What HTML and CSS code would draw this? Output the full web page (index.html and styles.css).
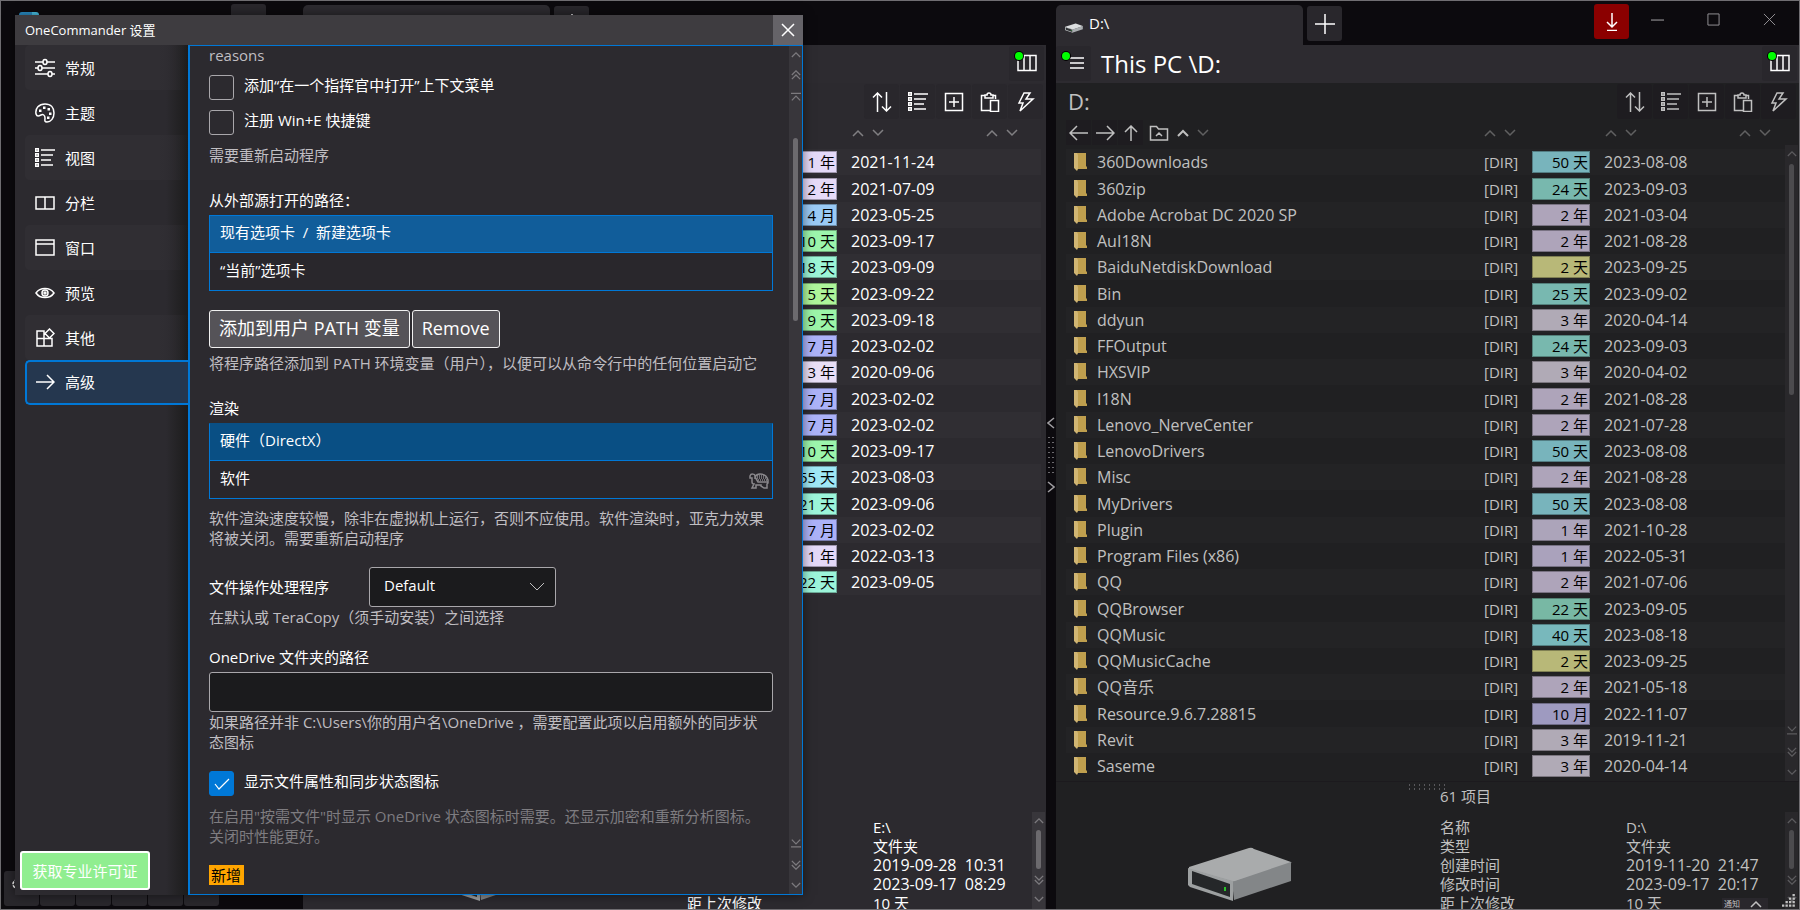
FILE: index.html
```html
<!DOCTYPE html>
<html lang="zh-CN">
<head>
    <meta charset="UTF-8">
    <meta name="viewport" content="width=device-width, initial-scale=1.0">
    <title>OneCommander</title>
    <link rel="stylesheet" href="styles.css">
</head>
<body>
    <!-- icon set -->
    <svg class="icon-set" aria-hidden="true">
        <symbol id="i-up" viewBox="0 0 12 8"><path d="M1 7l5-5 5 5"/></symbol>
        <symbol id="i-down" viewBox="0 0 12 8"><path d="M1 1l5 5 5-5"/></symbol>
        <symbol id="i-up2" viewBox="0 0 12 12"><path d="M1 6l5-5 5 5M1 11l5-5 5 5"/></symbol>
        <symbol id="i-down2" viewBox="0 0 12 12"><path d="M1 1l5 5 5-5M1 6l5 5 5-5"/></symbol>
        <symbol id="i-top" viewBox="0 0 12 12"><path d="M0 1.5h12M1 10l5-5 5 5"/></symbol>
        <symbol id="i-bottom" viewBox="0 0 12 12"><path d="M1 2l5 5 5-5M0 10.5h12"/></symbol>
        <symbol id="i-close" viewBox="0 0 14 14"><path d="M1 1l12 12M13 1L1 13"/></symbol>
        <symbol id="i-plus" viewBox="0 0 20 20"><path d="M10 0v20M0 10h20"/></symbol>
        <symbol id="i-sort" viewBox="0 0 20 20"><path d="M5.5 20V1M1 5.5L5.5 1 10 5.5M14.500 0v19M10 14.500l4.500 4.500 4.500-4.500"/></symbol>
        <symbol id="i-list" viewBox="0 0 20 20"><path d="M6 2h14M6 7h12M6 12h10M6 17h12"/><path class="solid" d="M0 0h4v4H0zM0 5h4v4H0zM0 10h4v4H0zM0 15h4v4H0z"/><path class="hole" d="M1.500 1.500h1v1h-1zM1.500 6.500h1v1h-1zM1.500 11.500h1v1h-1zM1.500 16.500h1v1h-1z"/></symbol>
        <symbol id="i-new" viewBox="0 0 20 20"><path d="M1.500 1.500h17v17h-17zM10 5v10M5 10h10"/></symbol>
        <symbol id="i-paste" viewBox="0 0 20 20"><path d="M10 18.500H1.500v-15H5M13 3.500h2.500V7M5 3v3h8V3h-2a2 2 0 0 0-4 0zM10.500 8.500h8v11h-8z"/></symbol>
        <symbol id="i-bolt" viewBox="0 0 20 20"><path d="M8 1h6l-4 6h7L4 19l3-8H3z"/></symbol>
        <symbol id="i-cols" viewBox="0 0 20 18"><path d="M1 1.500h18v15H1zM7 1.500v15M13 1.500v15"/></symbol>
        <symbol id="i-menu" viewBox="0 0 14 12"><path d="M0 1h14M0 6h14M0 11h14"/></symbol>
        <symbol id="i-left" viewBox="0 0 20 16"><path d="M19 8H1M8 1L1 8l7 7"/></symbol>
        <symbol id="i-right" viewBox="0 0 20 16"><path d="M1 8h18M12 1l7 7-7 7"/></symbol>
        <symbol id="i-upward" viewBox="0 0 16 16"><path d="M8 16V1M2 7l6-6 6 6"/></symbol>
        <symbol id="i-folderup" viewBox="0 0 20 16"><path d="M1.500 1.500h6l2 2.500h9v11h-17zM7 11l3-3 3 3"/></symbol>
        <symbol id="i-sliders" viewBox="0 0 20 20"><path d="M0 4h8M12 4h8M0 10h3M7 10h13M0 16h13M17 16h3"/><ellipse cx="10" cy="4" rx="2" ry="2.500"/><ellipse cx="5" cy="10" rx="2" ry="2.500"/><ellipse cx="15" cy="16" rx="2" ry="2.500"/></symbol>
        <symbol id="i-palette" viewBox="0 0 20 20"><path d="M1 11C0 5 4 1 10 1s9 4 9 9-3 9-7 9c-3 0-2-2-2-4 0-3-2-4-4-3-2 1-4 2-5-1z"/><path class="solid" d="M4 6.500h2.500V9H4zM8 3.500h2.500V6H8zM12.500 5H15v2.500h-2.500zM14 9.500h2.500V12H14zM12 13.500h2.500V16H12z"/></symbol>
        <symbol id="i-split" viewBox="0 0 20 20"><path d="M1 4h18v12H1zM10 4v12"/></symbol>
        <symbol id="i-window" viewBox="0 0 20 20"><path d="M1 2h18v15H1zM1 6h18"/></symbol>
        <symbol id="i-eye" viewBox="0 0 20 20"><path d="M1 10c4-6 14-6 18 0-4 6-14 6-18 0z"/><circle cx="10" cy="10" r="3"/><circle cx="10" cy="10" r="1"/></symbol>
        <symbol id="i-apps" viewBox="0 0 20 20"><path d="M2 3h7v15H2zM2 10.500h15V18H9v-7.500M14.500 1l4.500 4.500-4.500 4.500L10 5.500z"/></symbol>
        <symbol id="i-folder" viewBox="0 0 13 18"><path fill="#bf9f4e" d="M3 0h9v13l1 1v2H3z"/><path fill="#d0b573" d="M0 0h3l1 2v14l-1 2-3-3z"/></symbol>
        <symbol id="i-turtle" viewBox="0 0 20 16"><path d="M6 6V3c0-2-4-3-5 0v2h2v4c0 1 1 2 2 2l-2 4h4v-3h5v1l3 2h3v-4l1-1V7c-1-4-4-6-8-6-3 0-4 1-5 3l3 5h10"/><path class="dots" d="M8 3h7M8 5h9M9 7h9"/></symbol>
        <symbol id="i-drive" viewBox="0 0 104 54">
            <path fill="#a9abac" d="M1 20L61 1q3-1 5 1l37 13q1 1-1 2L46 35 1 22z"/>
            <path fill="#838688" d="M103 15v19L46 53 44 35z"/>
            <path fill="#9da0a1" d="M0 21l45 13v20L2 40l-2-2z"/>
            <path fill="#252729" d="M4 24l38 13v13L4 37z"/>
            <path fill="#27c427" d="M36 40h2v4h-2z"/>
        </symbol>
        <symbol id="i-grip" viewBox="0 0 12 12"><path class="solid" d="M9 0h2v2H9zM6 3h2v2H6zM9 3h2v2H9zM3 6h2v2H3zM6 6h2v2H6zM9 6h2v2H9zM0 9h2v2H0zM3 9h2v2H3zM6 9h2v2H6zM9 9h2v2H9z"/></symbol>
    </svg>

    <div class="window">
        <aside class="sidebar">
            <div class="sidebar-top">
                <span class="app-logo"></span>
                <button class="tool" aria-label="Minimize"><svg class="icon" viewBox="0 0 20 20"><path d="M0 7h20"/></svg></button>
            </div>
            <div class="sidebar-bottom">
                <button class="tool" aria-label="Settings">
                    <svg class="icon" viewBox="0 0 20 20"><circle cx="5" cy="5" r="4" stroke-dasharray="3 1"/><circle cx="13" cy="10" r="5" stroke-width="2" stroke-dasharray="3 2"/><circle cx="13" cy="10" r="2.5"/></svg>
                </button>
                <button class="tool" aria-label="Theme"><svg class="icon" viewBox="0 0 20 20"><circle cx="10" cy="3" r="7" stroke-width="2"/></svg></button>
                <button class="tool" aria-label="Layout"><svg class="icon" viewBox="0 0 20 20"><path d="M0 1h20v8H0z"/></svg></button>
                <button class="tool" aria-label="Edit"><svg class="icon" viewBox="0 0 20 20"><path d="M11 2L2 12"/></svg></button>
                <button class="tool" aria-label="Columns"><svg class="icon" viewBox="0 0 20 20"><path d="M3 0v11M17 0v11"/></svg></button>
                <button class="tool" aria-label="Transfer"><svg class="icon" viewBox="0 0 20 20"><path d="M0 8h11M16 2v10M12 8h8" stroke-width="3"/></svg></button>
            </div>
        </aside>

        <section class="pane active">
            <div class="tabs">
                <div class="tab"></div>
                <button class="tool" aria-label="New tab"><svg class="icon"><use href="#i-plus"/></svg></button>
            </div>
            <header class="pane-header">
                <button class="tool columns" aria-label="Columns"><svg class="icon"><use href="#i-cols"/></svg></button>
            </header>
            <div class="toolbar">
                <button class="tool" aria-label="Sort"><svg class="icon"><use href="#i-sort"/></svg></button>
                <button class="tool" aria-label="List view"><svg class="icon"><use href="#i-list"/></svg></button>
                <button class="tool" aria-label="New"><svg class="icon"><use href="#i-new"/></svg></button>
                <button class="tool" aria-label="Paste"><svg class="icon"><use href="#i-paste"/></svg></button>
                <button class="tool" aria-label="Actions"><svg class="icon"><use href="#i-bolt"/></svg></button>
            </div>
            <div class="sort-row">
                <div class="nav"></div>
                <div class="sorters"></div>
                <div class="sorters"><svg class="caret"><use href="#i-up"/></svg><svg class="caret"><use href="#i-down"/></svg></div>
                <div class="sorters"><svg class="caret"><use href="#i-up"/></svg><svg class="caret"><use href="#i-down"/></svg></div>
            </div>
            <div class="list">
                <table class="files">
                    <colgroup><col><col class="c-size"><col class="c-age"><col class="c-date"></colgroup>
                    <tbody id="filesLeft"></tbody>
                </table>
            </div>
            <footer class="details">
                <div class="preview"><svg class="drive"><use href="#i-drive"/></svg></div>
                <dl class="props">
                    <dt></dt><dd>E:\</dd>
                    <dt></dt><dd>文件夹</dd>
                    <dt></dt><dd class="num">2019-09-28&nbsp; 10:31</dd>
                    <dt></dt><dd class="num">2023-09-17&nbsp; 08:29</dd>
                    <dt>距上次修改</dt><dd>10 天</dd>
                </dl>
                <div class="scrollbar">
                    <svg class="caret"><use href="#i-up"/></svg>
                    <span class="thumb"></span>
                    <svg class="caret2"><use href="#i-down2"/></svg>
                    <svg class="caret"><use href="#i-down"/></svg>
                </div>
            </footer>
        </section>

        <div class="splitter">
            <svg viewBox="0 0 8 12"><path d="M7 1L1 6l6 5"/></svg>
            <span class="grip-v"></span>
            <svg viewBox="0 0 8 12"><path d="M1 1l6 5-6 5"/></svg>
        </div>

        <section class="pane inactive">
            <div class="tabs">
                <div class="tab"><svg class="drive-small"><use href="#i-drive"/></svg>D:\</div>
                <button class="tool" aria-label="New tab"><svg class="icon"><use href="#i-plus"/></svg></button>
                <div class="window-controls">
                    <button class="update" aria-label="Update"><svg viewBox="0 0 12 18"><path d="M6 0v14M1 9l5 5 5-5M1 17.500h10"/></svg></button>
                    <button aria-label="Minimize"><svg viewBox="0 0 12 12"><path d="M0 6.500h12"/></svg></button>
                    <button aria-label="Maximize"><svg viewBox="0 0 14 14"><path d="M1 1h12v12H1z"/></svg></button>
                    <button aria-label="Close"><svg viewBox="0 0 14 14"><use href="#i-close"/></svg></button>
                </div>
            </div>
            <header class="pane-header">
                <button class="tool menu" aria-label="Menu"><svg class="icon"><use href="#i-menu"/></svg></button>
                <h1>This PC \D:</h1>
                <button class="tool columns" aria-label="Columns"><svg class="icon"><use href="#i-cols"/></svg></button>
            </header>
            <div class="toolbar">
                <h2>D:</h2>
                <button class="tool" aria-label="Sort"><svg class="icon"><use href="#i-sort"/></svg></button>
                <button class="tool" aria-label="List view"><svg class="icon"><use href="#i-list"/></svg></button>
                <button class="tool" aria-label="New"><svg class="icon"><use href="#i-new"/></svg></button>
                <button class="tool" aria-label="Paste"><svg class="icon"><use href="#i-paste"/></svg></button>
                <button class="tool" aria-label="Actions"><svg class="icon"><use href="#i-bolt"/></svg></button>
            </div>
            <div class="sort-row">
                <div class="nav">
                    <button aria-label="Back"><svg class="arrow"><use href="#i-left"/></svg></button>
                    <button aria-label="Forward"><svg class="arrow"><use href="#i-right"/></svg></button>
                    <button aria-label="Up"><svg class="arrow"><use href="#i-upward"/></svg></button>
                    <svg class="folder-up"><use href="#i-folderup"/></svg>
                    <svg class="caret on"><use href="#i-up"/></svg>
                    <svg class="caret"><use href="#i-down"/></svg>
                </div>
                <div class="sorters"><svg class="caret"><use href="#i-up"/></svg><svg class="caret"><use href="#i-down"/></svg></div>
                <div class="sorters"><svg class="caret"><use href="#i-up"/></svg><svg class="caret"><use href="#i-down"/></svg></div>
                <div class="sorters"><svg class="caret"><use href="#i-up"/></svg><svg class="caret"><use href="#i-down"/></svg></div>
            </div>
            <div class="list">
                <table class="files">
                    <colgroup><col><col class="c-size"><col class="c-age"><col class="c-date"></colgroup>
                    <tbody id="filesRight"></tbody>
                </table>
                <div class="scrollbar">
                    <svg class="caret"><use href="#i-up"/></svg>
                    <span class="thumb"></span>
                    <svg class="caret2"><use href="#i-bottom"/></svg>
                    <svg class="caret2"><use href="#i-down2"/></svg>
                    <svg class="caret"><use href="#i-down"/></svg>
                </div>
            </div>
            <footer class="details">
                <span class="grip-h"></span>
                <div class="preview"><svg class="drive"><use href="#i-drive"/></svg></div>
                <div class="info">
                    <p class="count">61 项目</p>
                    <dl class="props">
                        <dt>名称</dt><dd>D:\</dd>
                        <dt>类型</dt><dd>文件夹</dd>
                        <dt>创建时间</dt><dd class="num">2019-11-20&nbsp; 21:47</dd>
                        <dt>修改时间</dt><dd class="num">2023-09-17&nbsp; 20:17</dd>
                        <dt>距上次修改</dt><dd>10 天</dd>
                    </dl>
                </div>
                <div class="scrollbar">
                    <svg class="caret"><use href="#i-up"/></svg>
                    <span class="thumb"></span>
                    <svg class="caret2"><use href="#i-down2"/></svg>
                    <svg class="caret"><use href="#i-down"/></svg>
                </div>
                <div class="notice">通知 <svg class="caret on"><use href="#i-up"/></svg></div>
                <svg class="grip-corner"><use href="#i-grip"/></svg>
            </footer>
        </section>
    </div>

    <div class="dialog" role="dialog" aria-label="OneCommander 设置">
        <div class="dialog-title">
            <span>OneCommander 设置</span>
            <button class="dialog-close" aria-label="Close"><svg><use href="#i-close"/></svg></button>
        </div>
        <div class="dialog-body">
            <nav class="menu-list">
                <a href="#general"><svg class="icon"><use href="#i-sliders"/></svg>常规</a>
                <a href="#theme"><svg class="icon"><use href="#i-palette"/></svg>主题</a>
                <a href="#view"><svg class="icon"><use href="#i-list"/></svg>视图</a>
                <a href="#columns"><svg class="icon"><use href="#i-split"/></svg>分栏</a>
                <a href="#window"><svg class="icon"><use href="#i-window"/></svg>窗口</a>
                <a href="#preview"><svg class="icon"><use href="#i-eye"/></svg>预览</a>
                <a href="#other"><svg class="icon"><use href="#i-apps"/></svg>其他</a>
                <a href="#advanced" class="selected"><svg class="icon arrow"><use href="#i-right"/></svg>高级</a>
                <button class="license">获取专业许可证</button>
            </nav>
            <form class="settings">
                <p class="note">reasons</p>
                <div class="check">
                    <input type="checkbox" id="contextMenu">
                    <label for="contextMenu">添加“在一个指挥官中打开”上下文菜单</label>
                </div>
                <div class="check">
                    <input type="checkbox" id="winE">
                    <label for="winE">注册 Win+E 快捷键</label>
                </div>
                <p class="note restart">需要重新启动程序</p>

                <p class="title">从外部源打开的路径：</p>
                <div class="options">
                    <label><input type="radio" name="external" checked>现有选项卡&nbsp; /&nbsp; 新建选项卡</label>
                    <label><input type="radio" name="external">“当前”选项卡</label>
                </div>

                <div class="buttons">
                    <button type="button">添加到用户 PATH 变量</button>
                    <button type="button">Remove</button>
                </div>
                <p class="note">将程序路径添加到 PATH 环境变量（用户），以便可以从命令行中的任何位置启动它</p>

                <p class="title">渲染</p>
                <div class="options flat">
                    <label><input type="radio" name="render" checked>硬件（DirectX）</label>
                    <label><input type="radio" name="render">软件<svg class="turtle"><use href="#i-turtle"/></svg></label>
                </div>
                <p class="note render">软件渲染速度较慢，除非在虚拟机上运行，否则不应使用。软件渲染时，亚克力效果<br>将被关闭。需要重新启动程序</p>

                <div class="select-row">
                    <label for="handler">文件操作处理程序</label>
                    <select id="handler">
                        <option>Default</option>
                        <option>TeraCopy</option>
                    </select>
                </div>
                <p class="note tight">在默认或 TeraCopy（须手动安装）之间选择</p>

                <label class="title path" for="onedrive">OneDrive 文件夹的路径</label>
                <input type="text" id="onedrive">
                <p class="note tight">如果路径并非 C:\Users\你的用户名\OneDrive ，需要配置此项以启用额外的同步状<br>态图标</p>

                <div class="check last">
                    <input type="checkbox" id="syncIcons" checked>
                    <label for="syncIcons">显示文件属性和同步状态图标</label>
                </div>
                <p class="note dim">在启用"按需文件"时显示 OneDrive 状态图标时需要。还显示加密和重新分析图标。<br>关闭时性能更好。</p>
                <p><span class="new">新增</span></p>
            </form>
            <div class="scrollbar">
                <svg class="caret"><use href="#i-up"/></svg>
                <svg class="caret2"><use href="#i-up2"/></svg>
                <svg class="caret2"><use href="#i-top"/></svg>
                <span class="thumb"></span>
                <svg class="caret2"><use href="#i-bottom"/></svg>
                <svg class="caret2"><use href="#i-down2"/></svg>
                <svg class="caret"><use href="#i-down"/></svg>
            </div>
        </div>
    </div>

    <script src="script.js"></script>
</body>
</html>
```
FILE: styles.css
```css
* {
    box-sizing: border-box;
}
body {
    margin: 0;
    height: 100vh;
    overflow: hidden;
    background-color: #0c0a0e;
    color: #fff;
    font: 15px/20px "Open Sans", "Noto Sans CJK SC", sans-serif;
}
h1, h2, p, dl, dd {
    margin: 0;
    font-weight: normal;
}
button, input, select {
    font: inherit;
    color: inherit;
    margin: 0;
    padding: 0;
}
button {
    background: none;
    border: none;
}
svg {
    display: block;
    flex: none;
    fill: none;
    stroke: currentColor;
    stroke-width: 1.5;
}
.solid {
    fill: currentColor;
    stroke: none;
}
.hole {
    fill: #2c2a2f;
    stroke: none;
}
.icon-set {
    display: none;
}
.icon {
    width: 20px;
    height: 20px;
}

/* main window */
.window {
    display: grid;
    grid-template-columns: 302px minmax(0, 1fr) 10px minmax(0, 1fr);
    height: 100vh;
    border: 1px solid #706e72;
}
.tool {
    display: flex;
    align-items: center;
    justify-content: center;
    flex: none;
    width: 35px;
    height: 35px;
    background-color: #29272c;
    border-radius: 3px;
}
.sidebar {
    display: flex;
    flex-direction: column;
    justify-content: space-between;
    padding: 3px;
}
.sidebar-top {
    display: flex;
    justify-content: space-between;
    padding: 0 34px 0 15px;
}
.app-logo {
    width: 20px;
    height: 20px;
    margin-top: 8px;
    border-radius: 3px;
    background: linear-gradient(to right, #2a8fc8 65%, #49c4e8 65%);
}
.sidebar-bottom {
    display: flex;
    gap: 1px;
}
.pane {
    display: flex;
    flex-direction: column;
    min-width: 0;
    height: calc(100vh - 2px);
}
.tabs {
    display: flex;
    gap: 4px;
    flex: none;
    height: 44px;
    padding-top: 4px;
    background-color: #0c0a0e;
}
.tabs .tool {
    margin-top: 1px;
}
.tab {
    display: flex;
    align-items: center;
    gap: 6px;
    width: 247px;
    padding: 0 9px 4px;
    background-color: #2d2b30;
    border-radius: 5px 5px 0 0;
}
.drive-small {
    width: 18px;
    height: 10px;
    margin-top: 9px;
    filter: brightness(1.3);
}
.drive-small, .drive {
    stroke: none;
}
.window-controls {
    display: flex;
    margin-left: auto;
    padding-right: 2px;
    color: #9a989c;
}
.window-controls button {
    display: flex;
    align-items: center;
    justify-content: center;
    width: 56px;
    height: 29px;
}
.window-controls svg {
    width: 13px;
    height: 13px;
    stroke-width: 1;
}
.window-controls .update {
    width: 35px;
    height: 35px;
    margin-top: -1px;
    background-color: #8b0000;
    border-radius: 3px;
    color: #fff;
}
.update svg {
    width: 12px;
    height: 18px;
    stroke-width: 1.5;
}
.pane-header {
    display: flex;
    align-items: center;
    flex: none;
    height: 38px;
    padding-right: 2px;
    background-color: #2d2b30;
}
.pane-header h1 {
    margin-left: 10px;
    font-size: 24px;
    line-height: 32px;
}
.pane-header .tool {
    position: relative;
    margin-bottom: 2px;
}
.pane-header .tool::before {
    content: "";
    position: absolute;
    top: 6px;
    left: 6px;
    width: 8px;
    height: 8px;
    border-radius: 50%;
    background-color: #00ff00;
    box-shadow: 0 0 0 1px #000;
}
.columns {
    margin-left: auto;
}
.menu .icon {
    width: 14px;
    height: 12px;
    margin-left: 6px;
}
.toolbar {
    display: flex;
    align-items: center;
    justify-content: flex-end;
    gap: 1px;
    flex: none;
    height: 37px;
    padding-right: 3px;
}
.toolbar h2 {
    margin-right: auto;
    padding: 0 0 2px 12px;
    font-size: 22px;
}
.sort-row {
    display: grid;
    grid-template-columns: minmax(0, 1fr) 121px 134px 60px;
    align-items: center;
    flex: none;
    height: 25px;
    padding-left: 10px;
}
.nav, .sorters {
    display: flex;
    align-items: center;
    gap: 8px;
}
.sort-row .caret {
    opacity: 0.4;
}
.sort-row .caret.on {
    opacity: 1;
    stroke-width: 2;
}
.nav button {
    display: flex;
    align-items: center;
    justify-content: center;
    width: 25px;
    height: 25px;
    margin-right: -7px;
    background-color: #1e1c20;
}
.arrow {
    width: 20px;
    height: 16px;
}
.folder-up {
    width: 20px;
    height: 16px;
    margin-left: 5px;
}
.caret {
    width: 12px;
    height: 8px;
}
.caret2 {
    width: 12px;
    height: 12px;
}
.active {
    background-color: #2c2a2f;
}
.inactive {
    background-color: #202022;
}
.inactive .toolbar,
.inactive .sort-row,
.inactive .list,
.inactive .details {
    color: #c0c0c0;
}
.inactive .toolbar .tool {
    background-color: #1e1c20;
}

/* file list */
.list {
    display: flex;
    flex: 1;
    min-height: 0;
    overflow: hidden;
    padding: 0 1px 0 10px;
}
.files {
    flex: 1;
    align-self: flex-start;
    margin-top: 4px;
    table-layout: fixed;
    border-collapse: collapse;
}
.c-size {
    width: 48px;
}
.c-age {
    width: 72px;
}
.c-date {
    width: 181px;
}
.active .c-date {
    width: 190px;
}
.active .files {
    margin-right: 4px;
}
.files td {
    height: 26px;
    padding: 0;
    white-space: nowrap;
}
.files tr:nth-child(4n+2) td {
    height: 27px;
}
.files tr:nth-child(odd) {
    background-color: #232325;
}
.active .files tr:nth-child(odd) {
    background-color: #302e33;
}
.file {
    display: flex;
    align-items: center;
    gap: 10px;
    padding-left: 8px;
    font-size: 16px;
}
.folder {
    width: 13px;
    height: 18px;
    stroke: none;
}
.age {
    display: block;
    width: 58px;
    height: 22px;
    padding-right: 1px;
    border: 1px solid rgba(0, 0, 0, 0.3);
    color: #000;
    text-align: right;
}
.num {
    font-size: 16px;
}

/* scrollbars */
.scrollbar {
    display: flex;
    flex-direction: column;
    align-items: center;
    flex: none;
    gap: 12px;
    width: 13px;
    padding: 5px 0;
    background-color: #38363b;
    color: #7c7a7e;
}
.scrollbar .caret {
    width: 10px;
    height: 7px;
}
.scrollbar .caret2 {
    width: 10px;
    height: 10px;
}
.thumb {
    width: 5px;
    margin-bottom: auto;
    border-radius: 3px;
    background-color: #6c6a6e;
}
.inactive .scrollbar {
    background-color: #29282b;
    color: #5c5b5e;
}
.inactive .thumb {
    background-color: #4c4b4e;
}
.list .thumb {
    height: 231px;
    margin-top: -5px;
}

/* bottom panel */
.details {
    position: relative;
    display: flex;
    flex: none;
    height: 128px;
    padding-right: 1px;
    overflow: hidden;
    border-top: 1px solid #1c1a1e;
}
.active .details {
    border-color: transparent;
}
.preview {
    width: 384px;
    padding: 65px 0 0 132px;
}
.drive {
    width: 104px;
    height: 54px;
}
.info {
    flex: 1;
}
.count {
    height: 36px;
    padding-top: 4px;
}
.props {
    display: grid;
    grid-template-columns: 186px 1fr;
    grid-auto-rows: 19px;
    align-content: start;
    flex: 1;
    line-height: 19px;
}
.active .props {
    padding-top: 36px;
}
.details .scrollbar {
    gap: 6px;
    margin-top: 30px;
}
.details .thumb {
    height: 39px;
    margin-bottom: 0;
}
.details .thumb + .caret2 {
    margin-bottom: 5px;
}
.grip-h {
    position: absolute;
    top: 1px;
    left: 351px;
    width: 38px;
    height: 8px;
    background: radial-gradient(circle, #59585c 1px, transparent 1px) 0 0 / 5px 4px;
}
.notice {
    position: absolute;
    right: 31px;
    bottom: 0;
    display: flex;
    align-items: center;
    gap: 10px;
    padding: 0 6px 0 2px;
    background-color: #29272c;
    font-size: 8px;
    line-height: 11px;
}
.grip-corner {
    position: absolute;
    right: 3px;
    bottom: 1px;
    width: 14px;
    height: 14px;
}
.splitter {
    display: flex;
    flex-direction: column;
    align-items: center;
    justify-content: center;
    gap: 6px;
    color: #a09ea2;
}
.splitter svg {
    width: 8px;
    height: 12px;
}
.grip-v {
    width: 8px;
    height: 40px;
    background: radial-gradient(circle, #6c6a6e 1px, transparent 1px) 0 0 / 4px 5px;
}

/* settings dialog */
.dialog {
    position: absolute;
    top: 15px;
    bottom: 15px;
    left: 15px;
    display: flex;
    flex-direction: column;
    width: 788px;
    background-color: #2c2a2f;
    box-shadow: 0 0 10px rgba(0, 0, 0, 0.5);
}
.dialog-title {
    display: flex;
    align-items: center;
    justify-content: space-between;
    flex: none;
    height: 30px;
    padding-left: 10px;
    background-color: #3e3c40;
    font-size: 13px;
}
.dialog-close {
    display: flex;
    align-items: center;
    justify-content: center;
    width: 30px;
    height: 30px;
    background-color: #656368;
}
.dialog-close svg {
    width: 14px;
    height: 14px;
}
.dialog-body {
    display: flex;
    flex: 1;
    min-height: 0;
}
.menu-list {
    display: flex;
    flex-direction: column;
    flex: none;
    width: 173px;
    padding: 0 0 5px 10px;
    background: linear-gradient(to left, #1c1c1c, rgba(28, 28, 28, 0) 22px);
}
.menu-list a {
    display: flex;
    align-items: center;
    gap: 10px;
    height: 45px;
    padding-left: 10px;
    border-radius: 5px 0 0 5px;
    color: #fff;
    text-decoration: none;
}
.menu-list a:nth-child(odd) {
    background: linear-gradient(to left, rgba(48, 46, 51, 0), #302e33 30px);
}
.menu-list a.selected {
    padding: 0 0 1px 8px;
    border: 2px solid #0078d7;
    border-right: none;
    background-color: #25374f;
}
.license {
    width: 130px;
    height: 39px;
    margin: auto 0 0 -5px;
    border: 2px solid #fff;
    border-radius: 3px;
    background-color: #90ee90;
}
.settings {
    flex: 1;
    padding: 0 16px 0 19px;
    overflow: hidden;
    border: 1px solid #0078d7;
    border-left-width: 2px;
    border-right: none;
}
.dialog .scrollbar {
    width: 14px;
    border: 1px solid #0078d7;
    border-left: none;
}
.dialog .thumb {
    height: 183px;
    margin-top: 24px;
}
.note {
    margin-top: 5px;
    color: #c0bec2;
    white-space: nowrap;
}
.note:first-child {
    margin: -1px 0 10px;
}
.note.restart, .note.render {
    margin-top: 9px;
}
.note.tight {
    margin-top: 0;
}
.note.dim {
    margin: 10px 0 19px;
    color: #7e7c80;
}
.title {
    display: block;
    margin: 25px 0 5px;
}
.title.path {
    margin-top: 20px;
}
.check {
    display: flex;
    gap: 10px;
    margin-bottom: 10px;
}
.check.last {
    margin-top: 19px;
}
.check input {
    appearance: none;
    width: 25px;
    height: 25px;
    border: 1px solid #a9a7ab;
    border-radius: 3px;
}
.check input:checked {
    border-color: #0078d7;
    background: #0078d7 url("data:image/svg+xml,%3Csvg xmlns='http://www.w3.org/2000/svg' viewBox='0 0 16 12'%3E%3Cpath d='M1 6l4 5 10-10' fill='none' stroke='white' stroke-width='1.2'/%3E%3C/svg%3E") center / 16px 12px no-repeat;
}
.options {
    border: 1px solid #0078d7;
    margin-bottom: 19px;
}
.options label {
    display: flex;
    align-items: center;
    height: 37px;
    padding: 0 2px 4px 10px;
    background-color: #29272c;
}
.options label:first-child {
    border-bottom: 1px solid #0078d7;
    background-color: #115d9a;
}
.options.flat {
    border-top-color: #094f84;
    margin-bottom: 0;
}
.options.flat label:first-child {
    background-color: #094f84;
}
.options input {
    position: absolute;
    appearance: none;
}
.turtle {
    width: 20px;
    height: 16px;
    margin: 6px 1px 0 auto;
    color: #8a888c;
}
.dots {
    stroke-dasharray: 1 1;
}
.buttons {
    display: flex;
    gap: 2px;
}
.buttons button {
    height: 38px;
    padding: 0 9px 2px;
    border: 1px solid #f0f0f0;
    border-radius: 3px;
    background-color: #555358;
    font-size: 18px;
}
.select-row {
    display: flex;
    align-items: center;
    gap: 40px;
    margin-top: 19px;
}
.settings select,
.settings input[type="text"] {
    appearance: none;
    height: 40px;
    border: 1px solid #a9a7ab;
    border-radius: 3px;
    background-color: #1b1b1d;
}
.settings select {
    width: 187px;
    padding: 0 14px 4px;
    background-image: url("data:image/svg+xml,%3Csvg xmlns='http://www.w3.org/2000/svg' viewBox='0 0 16 10'%3E%3Cpath d='M1 1l7 7 7-7' fill='none' stroke='%23c0c0c0'/%3E%3C/svg%3E");
    background-position: right 10px center;
    background-size: 16px 10px;
    background-repeat: no-repeat;
}
.settings input[type="text"] {
    display: block;
    width: 100%;
    padding: 0 10px;
}
.new {
    display: inline-block;
    padding: 0 3px 0 2px;
    background-color: #ffa500;
    color: #000;
}
```
FILE: script.js
```js
// name, age, modified date, age colour
var leftFiles = [
    ["", "1 年", "2021-11-24", "#e4d9f8"],
    ["", "2 年", "2021-07-09", "#e6daf8"],
    ["", "4 月", "2023-05-25", "#9acaf5"],
    ["", "10 天", "2023-09-17", "#9cf5ac"],
    ["", "18 天", "2023-09-09", "#9cf5d6"],
    ["", "5 天", "2023-09-22", "#aef59a"],
    ["", "9 天", "2023-09-18", "#9cf5a8"],
    ["", "7 月", "2023-02-02", "#acb2f8"],
    ["", "3 年", "2020-09-06", "#e8def6"],
    ["", "7 月", "2023-02-02", "#acb2f8"],
    ["", "7 月", "2023-02-02", "#acb2f8"],
    ["", "10 天", "2023-09-17", "#9cf5ac"],
    ["", "55 天", "2023-08-03", "#9fe8f5"],
    ["", "21 天", "2023-09-06", "#9cf5da"],
    ["", "7 月", "2023-02-02", "#acb2f8"],
    ["", "1 年", "2022-03-13", "#e4d9f8"],
    ["", "22 天", "2023-09-05", "#9cf5da"]
];

var rightFiles = [
    ["360Downloads", "50 天", "2023-08-08", "#78b4bc"],
    ["360zip", "24 天", "2023-09-03", "#78b8ae"],
    ["Adobe Acrobat DC 2020 SP", "2 年", "2021-03-04", "#aea4ba"],
    ["AuI18N", "2 年", "2021-08-28", "#aea4ba"],
    ["BaiduNetdiskDownload", "2 天", "2023-09-25", "#b8b878"],
    ["Bin", "25 天", "2023-09-02", "#78b8b0"],
    ["ddyun", "3 年", "2020-04-14", "#b0aab6"],
    ["FFOutput", "24 天", "2023-09-03", "#78b8ae"],
    ["HXSVIP", "3 年", "2020-04-02", "#b0aab6"],
    ["I18N", "2 年", "2021-08-28", "#aea4ba"],
    ["Lenovo_NerveCenter", "2 年", "2021-07-28", "#aea4ba"],
    ["LenovoDrivers", "50 天", "2023-08-08", "#78b4bc"],
    ["Misc", "2 年", "2021-08-28", "#aea4ba"],
    ["MyDrivers", "50 天", "2023-08-08", "#78b4bc"],
    ["Plugin", "1 年", "2021-10-28", "#aca4ba"],
    ["Program Files (x86)", "1 年", "2022-05-31", "#aaa2bc"],
    ["QQ", "2 年", "2021-07-06", "#aea4ba"],
    ["QQBrowser", "22 天", "2023-09-05", "#78b8a4"],
    ["QQMusic", "40 天", "2023-08-18", "#78b8bc"],
    ["QQMusicCache", "2 天", "2023-09-25", "#b8b878"],
    ["QQ音乐", "2 年", "2021-05-18", "#aea4ba"],
    ["Resource.9.6.7.28815", "10 月", "2022-11-07", "#9e9ac0"],
    ["Revit", "3 年", "2019-11-21", "#b0aab6"],
    ["Saseme", "3 年", "2020-04-14", "#b0aab6"]
];

function fillTable(id, files) {
    var rows = "";
    files.forEach(function (f) {
        var name = f[0] ? `<span class="file"><svg class="folder"><use href="#i-folder"/></svg>${f[0]}</span>` : "";
        rows += `<tr>
            <td>${name}</td>
            <td>${f[0] ? "[DIR]" : ""}</td>
            <td><span class="age" style="background-color: ${f[3]}">${f[1]}</span></td>
            <td class="num">${f[2]}</td>
        </tr>`;
    });
    document.getElementById(id).innerHTML = rows;
}

fillTable("filesLeft", leftFiles);
fillTable("filesRight", rightFiles);
```
